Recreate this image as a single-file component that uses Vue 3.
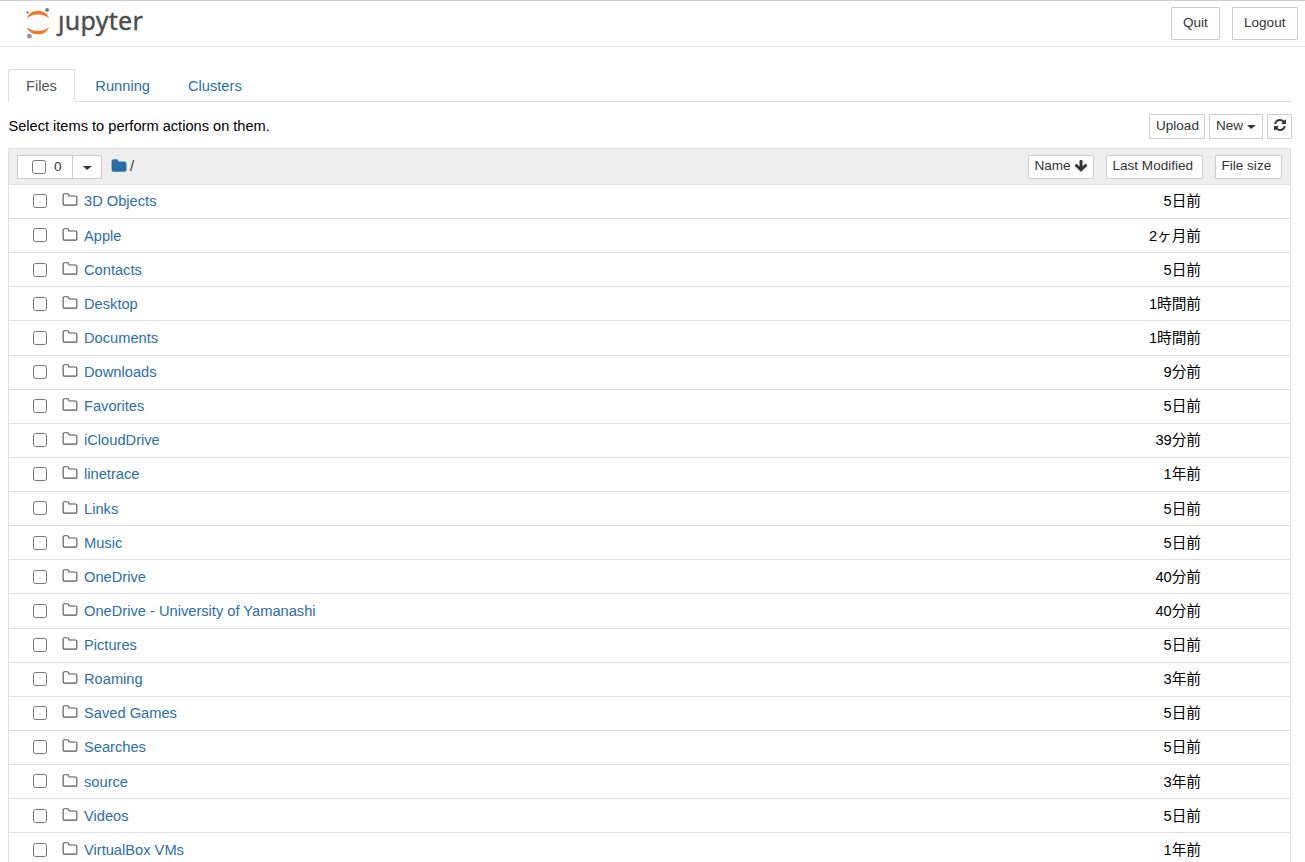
<template>
  <div class="page">
    <header class="header">
      <div class="logo">
        <svg class="logo-mark" width="28" height="34" viewBox="0 0 28 34">
          <path d="M2.6 13.3 A12.3 12.3 0 0 1 25.2 13.3 A18.4 18.4 0 0 0 2.6 13.3 Z" fill="#f37726" />
          <path d="M2.6 21.9 A12.3 12.3 0 0 0 25.2 21.9 A18.4 18.4 0 0 1 2.6 21.9 Z" fill="#f37726" />
          <circle cx="23.1" cy="4.9" r="1.9" fill="#767677" />
          <circle cx="3.5" cy="7.4" r="1.2" fill="#767677" />
          <circle cx="5.4" cy="31.2" r="2.4" fill="#979797" />
        </svg>
        <span class="logo-text"><span class="logo-j">j</span>upyter</span>
      </div>
      <div class="header-buttons">
        <button class="btn btn-quit">Quit</button>
        <button class="btn btn-logout">Logout</button>
      </div>
    </header>

    <main class="content">
      <nav class="tabs">
        <a v-for="tab in tabs" :key="tab" class="tab" :class="{ active: tab === activeTab }" @click="activeTab = tab">{{ tab }}</a>
      </nav>

      <div class="toolbar">
        <span class="info">Select items to perform actions on them.</span>
        <div class="toolbar-buttons">
          <button class="btn btn-upload">Upload</button>
          <button class="btn btn-new">New <span class="caret"></span></button>
          <button class="btn btn-refresh" title="Refresh">
            <svg width="14" height="14" viewBox="0 0 1792 1792"><path :d="icons.refresh" /></svg>
          </button>
        </div>
      </div>

      <div class="list">
        <div class="list-header">
          <div class="selector">
            <label class="select-all">
              <input v-model="allSelected" type="checkbox" class="check" />
              <span class="count">{{ selected.length }}</span>
            </label>
            <button class="select-menu"><span class="caret"></span></button>
          </div>
          <div class="breadcrumb">
            <svg width="16" height="16" viewBox="0 0 1792 1792"><path :d="icons.folder" /></svg>
            <span>/</span>
          </div>
          <div class="sort-buttons">
            <button class="btn btn-name">Name <svg width="14" height="14" viewBox="0 0 1792 1792"><path :d="icons.arrowDown" /></svg></button>
            <button class="btn btn-modified">Last Modified</button>
            <button class="btn btn-size">File size</button>
          </div>
        </div>

        <div v-for="item in items" :key="item.name" class="row">
          <input v-model="selected" type="checkbox" class="check" :value="item.name" />
          <svg class="folder" width="16" height="16" viewBox="0 0 1792 1792"><path :d="icons.folderOpen" /></svg>
          <a class="name">{{ item.name }}</a>
          <span class="modified">{{ item.modified }}</span>
        </div>
      </div>
    </main>
  </div>
</template>

<script setup>
import { ref, computed } from 'vue'

const tabs = ['Files', 'Running', 'Clusters']
const activeTab = ref('Files')

const items = [
  { name: '3D Objects', modified: '5日前' },
  { name: 'Apple', modified: '2ヶ月前' },
  { name: 'Contacts', modified: '5日前' },
  { name: 'Desktop', modified: '1時間前' },
  { name: 'Documents', modified: '1時間前' },
  { name: 'Downloads', modified: '9分前' },
  { name: 'Favorites', modified: '5日前' },
  { name: 'iCloudDrive', modified: '39分前' },
  { name: 'linetrace', modified: '1年前' },
  { name: 'Links', modified: '5日前' },
  { name: 'Music', modified: '5日前' },
  { name: 'OneDrive', modified: '40分前' },
  { name: 'OneDrive - University of Yamanashi', modified: '40分前' },
  { name: 'Pictures', modified: '5日前' },
  { name: 'Roaming', modified: '3年前' },
  { name: 'Saved Games', modified: '5日前' },
  { name: 'Searches', modified: '5日前' },
  { name: 'source', modified: '3年前' },
  { name: 'Videos', modified: '5日前' },
  { name: 'VirtualBox VMs', modified: '1年前' },
]

const selected = ref([])

// Header checkbox toggles every row
const allSelected = computed({
  get: () => selected.value.length === items.length,
  set: (value) => {
    selected.value = value ? items.map((item) => item.name) : []
  },
})

const icons = {
  folder: 'M1728 608v704q0 92-66 158t-158 66h-1216q-92 0-158-66t-66-158v-960q0-92 66-158t158-66h320q92 0 158 66t66 158v32h672q92 0 158 66t66 158z',
  folderOpen: 'M1600 1312v-704q0-40-28-68t-68-28h-704q-40 0-68-28t-28-68v-64q0-40-28-68t-68-28h-320q-40 0-68 28t-28 68v960q0 40 28 68t68 28h1216q40 0 68-28t28-68zm128-704v704q0 92-66 158t-158 66h-1216q-92 0-158-66t-66-158v-960q0-92 66-158t158-66h320q92 0 158 66t66 158v32h672q92 0 158 66t66 158z',
  refresh: 'M1639 1056q0 5-1 7-64 268-268 434.5t-478 166.5q-146 0-282.5-55t-243.5-157l-129 129q-19 19-45 19t-45-19-19-45v-448q0-26 19-45t45-19h448q26 0 45 19t19 45-19 45l-137 137q71 66 161 102t187 36q134 0 250-65t186-179q11-17 53-117 8-23 30-23h192q13 0 22.5 9.5t9.5 22.5zm25-800v448q0 26-19 45t-45 19h-448q-26 0-45-19t-19-45 19-45l138-138q-148-137-349-137-134 0-250 65t-186 179q-11 17-53 117-8 23-30 23h-199q-13 0-22.5-9.5t-9.5-22.5v-7q65-268 270-434.5t480-166.5q146 0 284 55.5t245 156.5l130-129q19-19 45-19t45 19 19 45z',
  arrowDown: 'M1675 832q0 53-37 90l-651 652q-39 37-91 37-53 0-90-37l-651-652q-38-36-38-90 0-53 38-91l74-75q39-37 91-37 53 0 90 37l294 294v-704q0-52 38-90t90-38h128q52 0 90 38t38 90v704l294-294q37-37 90-37 52 0 91 37l75 75q37 39 37 91z',
}
</script>

<style>
body {
  background: #fff;
  overflow: hidden;
}
</style>

<style scoped>
.page {
  height: 862px;
  overflow: hidden;
  box-sizing: border-box;
  border-top: 1px solid #ccc;
  font-family: "Liberation Sans", "Noto Sans CJK JP", sans-serif;
  font-size: 14.67px;
  line-height: 21px;
  color: #000;
}
.page * {
  box-sizing: border-box;
}
svg {
  display: block;
  flex: none;
  fill: currentColor;
}
.header {
  display: flex;
  justify-content: space-between;
  height: 46px;
  padding: 6px 7px 0 24px;
  border-bottom: 1px solid #e7e7e7;
}
.logo {
  display: flex;
}
.logo-mark {
  margin-top: -2px;
}
.logo-text {
  margin: -4px 0 0 6px;
  font-family: "Noto Sans", sans-serif;
  font-size: 25px;
  line-height: 34px;
  letter-spacing: 0.3px;
  color: #4e4e4e;
  -webkit-text-stroke: 0.4px #4e4e4e;
}
/* the wordmark's j has no dot */
.logo-j {
  display: inline-block;
  clip-path: inset(12px -6px -4px -6px);
}
.header-buttons {
  display: flex;
  gap: 12px;
}
.btn {
  display: flex;
  align-items: center;
  gap: 4px;
  height: 25px;
  padding: 0 6px 2px;
  border: 1px solid #ccc;
  border-radius: 1px;
  background: #fff;
  color: #333;
  font-family: inherit;
  font-size: 13.55px;
  line-height: 20px;
  white-space: nowrap;
}
.btn-quit,
.btn-logout {
  width: 49px;
  height: 33px;
  padding: 0 11px 2px;
}
.btn-logout {
  width: 66px;
}
.content {
  padding: 22px 14px 0 8px;
}
.tabs {
  display: flex;
  gap: 2px;
  height: 33px;
  border-bottom: 1px solid #ddd;
}
.tab {
  height: 33px;
  padding: 6px 17px;
  border: 1px solid transparent;
  border-radius: 2px 2px 0 0;
  color: #296eaa;
  cursor: pointer;
}
.tab.active {
  padding-right: 17.4px;
  border-color: #ddd;
  border-bottom-color: #fff;
  background: #fff;
  color: #555;
}
.toolbar {
  display: flex;
  justify-content: space-between;
  height: 46px;
  padding-top: 12px;
  margin-right: -1px;
}
.info {
  padding: 2px 0 0 0.4px;
  font-size: 14.62px;
}
.toolbar-buttons {
  display: flex;
  gap: 4px;
}
.btn-upload {
  width: 56px;
}
.btn-new {
  width: 54px;
}
.btn-refresh {
  width: 25px;
  padding: 0 5px 3px;
}
.caret {
  flex: none;
  border-top: 4.5px solid #333;
  border-top-width: 4px;
  border-left: 4.5px solid transparent;
  border-right: 5px solid transparent;
  margin-top: 3px;
}
.list {
  border: 1px solid #ddd;
  border-radius: 1px;
}
.list-header {
  display: flex;
  height: 34.94px;
  padding: 6px 8px 0;
  background: #eee;
}
.selector {
  display: flex;
  width: 85px;
  height: 24px;
  border: 1px solid #ccc;
  background: #fff;
  color: #333;
  font-size: 13.55px;
}
.select-all {
  display: flex;
  align-items: center;
  gap: 8px;
  width: 54px;
  padding-left: 14px;
}
.count {
  padding-bottom: 2px;
}
.select-menu {
  flex: 1;
  display: flex;
  align-items: center;
  justify-content: center;
  padding: 0;
  border: 0;
  border-left: 1px solid #ccc;
  background: #fff;
}
.select-menu .caret {
  margin-top: 1px;
}
.check {
  appearance: none;
  flex: none;
  width: 14px;
  height: 14px;
  margin: 0;
  border: 1px solid #767676;
  border-radius: 2.5px;
  background: #fff;
}
.check:checked {
  background: #0075ff;
}
.breadcrumb {
  display: flex;
  gap: 3px;
  margin-left: 9px;
  padding-top: 1px;
  color: #333;
}
.breadcrumb svg {
  margin-top: 1.5px;
  color: #296eaa;
}
.sort-buttons {
  display: flex;
  gap: 12px;
  margin-left: auto;
}
.sort-buttons .btn {
  height: 24px;
  padding-left: 5.5px;
}
.sort-buttons .btn-name {
  gap: 3px;
  width: 66px;
}
.btn-modified {
  width: 97px;
}
.btn-size {
  width: 67px;
}
.row {
  display: flex;
  height: 34.125px;
  padding: 6.47px 89px 0 24px;
  border-top: 1px solid #ddd;
}
.row .check {
  margin-top: 2.9px;
}
.folder {
  margin: 1px 0 0 15px;
  color: #555;
}
.name {
  margin-left: 6px;
  color: #296eaa;
}
.modified {
  margin-left: auto;
}
</style>
